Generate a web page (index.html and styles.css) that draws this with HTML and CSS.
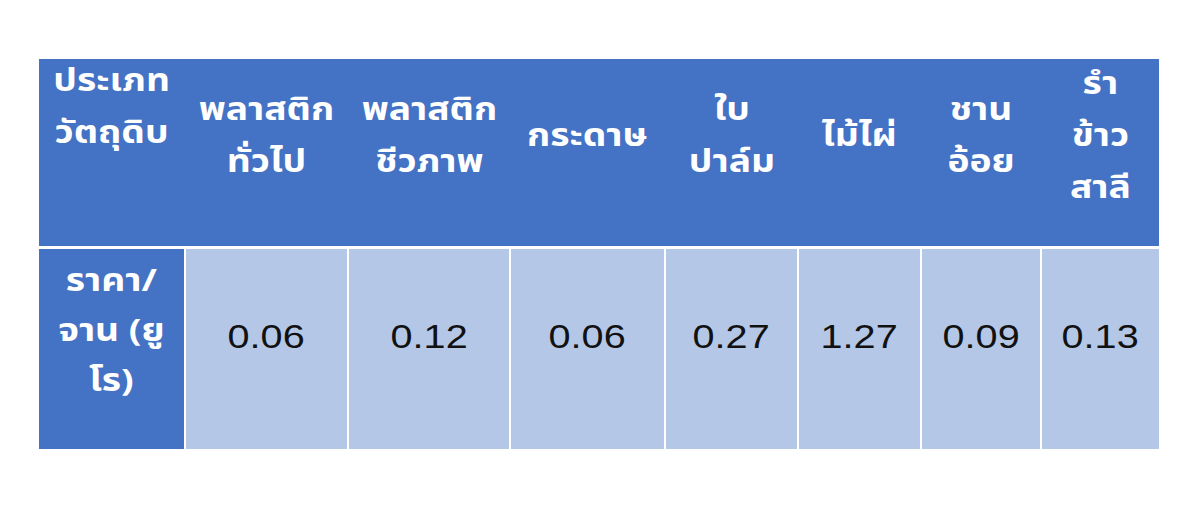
FILE: index.html
```html
<!DOCTYPE html>
<html lang="th">
<head>
<meta charset="utf-8">
<title>ราคาจาน</title>
<link rel="stylesheet" href="styles.css">
</head>
<body>
<div class="table">
  <div class="row head">
    <div class="cell top"><span class="txt">ประเภท<br>วัตถุดิบ</span></div>
    <div class="cell"><span class="txt">พลาสติก<br>ทั่วไป</span></div>
    <div class="cell"><span class="txt">พลาสติก<br>ชีวภาพ</span></div>
    <div class="cell"><span class="txt">กระดาษ</span></div>
    <div class="cell"><span class="txt">ใบ<br>ปาล์ม</span></div>
    <div class="cell"><span class="txt">ไม้ไผ่</span></div>
    <div class="cell"><span class="txt">ชาน<br>อ้อย</span></div>
    <div class="cell"><span class="txt">รำ<br>ข้าว<br>สาลี</span></div>
  </div>
  <div class="row data">
    <div class="cell label"><span class="txt">ราคา/<br>จาน (ยู<br>โร)</span></div>
    <div class="cell num"><span class="txt">0.06</span></div>
    <div class="cell num"><span class="txt">0.12</span></div>
    <div class="cell num"><span class="txt">0.06</span></div>
    <div class="cell num"><span class="txt">0.27</span></div>
    <div class="cell num"><span class="txt">1.27</span></div>
    <div class="cell num"><span class="txt">0.09</span></div>
    <div class="cell num"><span class="txt">0.13</span></div>
  </div>
</div>
</body>
</html>
```
FILE: styles.css
```css
html, body {
  margin: 0;
  padding: 0;
  background: #ffffff;
}
.table {
  display: flex;
  flex-direction: column;
  gap: 3px;
  width: 1120px;
  margin: 59px 0 0 39px;
}
.row {
  display: grid;
  grid-template-columns: 145px 161px 160px 153px 131px 121px 118px 117px;
  column-gap: 2px;
}
.head {
  height: 187px;
  background: #4472c4;
}
.data {
  height: 200px;
}
.cell {
  display: flex;
  align-items: center;
  justify-content: center;
  text-align: center;
  font-family: "Noto Sans Thai", "Noto Sans", "DejaVu Sans", sans-serif;
  font-weight: 700;
  font-size: 31px;
  line-height: 50px;
  color: #ffffff;
  white-space: nowrap;
}
.txt {
  display: inline-block;
  transform: scaleX(1.2);
}
.head .cell {
  line-height: 52px;
  padding-bottom: 37px;
}
.head .cell.top {
  align-items: flex-start;
  padding-top: 0;
  margin-top: -3px;
}
.data .cell {
  background: #b4c7e7;
  padding-bottom: 34px;
}
.data .cell.label {
  background: #4472c4;
}
.data .cell.num {
  font-family: "Liberation Sans", Arial, sans-serif;
  font-weight: 400;
  font-size: 33px;
  color: #111111;
  padding-bottom: 24px;
}
```
